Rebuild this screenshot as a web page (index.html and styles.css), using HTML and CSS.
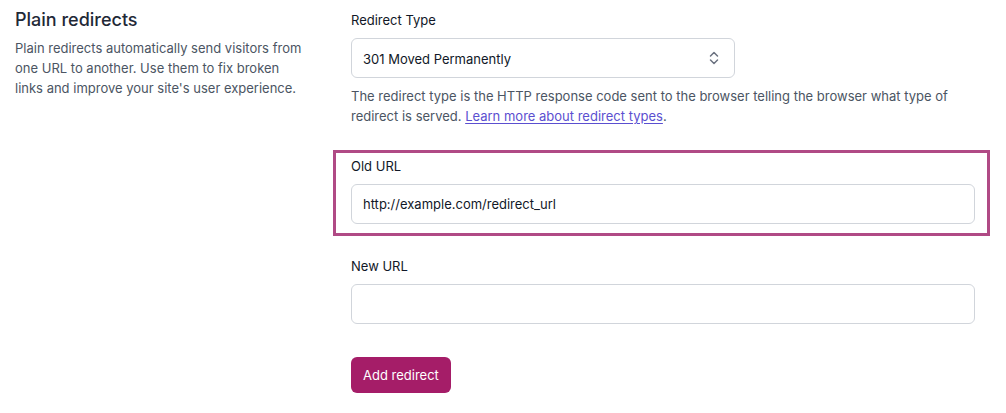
FILE: index.html
```html
<!DOCTYPE html>
<html lang="en">
<head>
<meta charset="utf-8">
<title>Plain redirects</title>
<link rel="stylesheet" href="styles.css">
</head>
<body>
<div class="page">
  <aside class="intro">
    <h2 class="intro-title">Plain redirects</h2>
    <p class="intro-text">Plain redirects automatically send visitors from one URL to another. Use them to fix broken links and improve your site's user experience.</p>
  </aside>
  <main class="form">
    <div class="field">
      <label class="label" for="type">Redirect Type</label>
      <div class="select-wrap">
        <select id="type" class="select">
          <option>301 Moved Permanently</option>
        </select>
        <svg class="select-icon" width="12" height="16" viewBox="0 0 12 16" aria-hidden="true">
          <path d="M2.5 6 L6 2.5 L9.5 6" fill="none" stroke="#6b7280" stroke-width="1.5" stroke-linecap="round" stroke-linejoin="round"/>
          <path d="M2.5 10 L6 13.5 L9.5 10" fill="none" stroke="#6b7280" stroke-width="1.5" stroke-linecap="round" stroke-linejoin="round"/>
        </svg>
      </div>
      <p class="help">The redirect type is the HTTP response code sent to the browser telling the browser what type of redirect is served. <a href="#" class="link">Learn more about redirect types</a>.</p>
    </div>
    <div class="field field-highlight">
      <label class="label" for="old">Old URL</label>
      <input id="old" class="input" type="text" value="http://example.com/redirect_url">
    </div>
    <div class="field field-last">
      <label class="label" for="new">New URL</label>
      <input id="new" class="input" type="text" value="">
    </div>
    <div class="actions">
      <button class="button" type="button">Add redirect</button>
    </div>
  </main>
</div>
</body>
</html>
```
FILE: styles.css
```css
* { box-sizing: border-box; }
body {
  margin: 0;
  background: #ffffff;
  font-family: Inter, "Noto Sans", "Liberation Sans", sans-serif;
  color: #1f2937;
}
.page {
  display: grid;
  grid-template-columns: 333px 1fr;
  padding-right: 16px;
}
.intro {
  padding: 8px 15px 0 15px;
}
.intro-title {
  margin: 0;
  font-size: 18px;
  line-height: 24px;
  font-weight: 500;
  color: #1f2937;
}
.intro-text {
  margin: 6px 0 0;
  max-width: 288px;
  font-size: 13px;
  line-height: 20px;
  color: #4b5563;
}
.form {
  display: flex;
  flex-direction: column;
  padding-top: 4px;
}
.field {
  border: 3px solid transparent;
  padding: 4px 12px 9px 15px;
  margin-bottom: 12px;
}
.field-highlight {
  border-color: #b04a85;
}
.field-last {
  padding-top: 6px;
  margin-bottom: 0;
}
.label {
  display: block;
  font-size: 13px;
  line-height: 18px;
  font-weight: 400;
  color: #111827;
  margin-bottom: 9px;
}
.select-wrap {
  position: relative;
  width: 384px;
}
.select {
  appearance: none;
  -webkit-appearance: none;
  width: 100%;
  height: 40px;
  border: 1px solid #d1d5db;
  border-radius: 6px;
  background: #ffffff;
  padding: 1px 36px 0 11px;
  font-family: inherit;
  font-size: 13px;
  font-weight: 400;
  color: #111827;
}
.select-icon {
  position: absolute;
  right: 15px;
  top: 12px;
}
.help {
  margin: 8px 0 0;
  font-size: 13px;
  line-height: 20px;
  color: #4b5563;
  max-width: 610px;
}
.link {
  color: #5b4fd0;
  text-decoration: underline;
  text-underline-offset: 2px;
}
.input {
  display: block;
  width: 100%;
  height: 40px;
  border: 1px solid #d1d5db;
  border-radius: 6px;
  background: #ffffff;
  padding: 0 11px;
  font-family: inherit;
  font-size: 13px;
  color: #111827;
}
.field-last .input {
  margin-top: 1px;
}
.actions {
  padding: 21px 0 0 18px;
}
.button {
  height: 36px;
  padding: 0 12px;
  border: none;
  border-radius: 6px;
  background: #a51d68;
  color: #ffffff;
  font-family: inherit;
  font-size: 13px;
  font-weight: 400;
}
```
